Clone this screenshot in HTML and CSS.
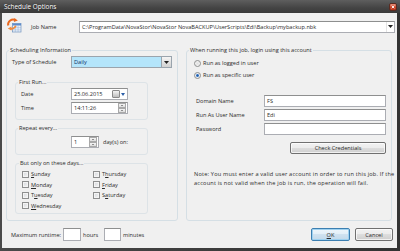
FILE: index.html
```html
<!DOCTYPE html>
<html lang="en">
<head>
    <meta charset="UTF-8">
    <title>Schedule Options</title>
    <link rel="stylesheet" href="styles.css">
</head>
<body>
<div class="window">
    <div class="titlebar">
        <span class="title">Schedule Options</span>
        <span class="close-btn">
            <svg viewBox="0 0 8 8" width="8" height="8">
                <path d="M2.3 2.3l3.4 3.4M5.7 2.3l-3.4 3.4" stroke="#fff" stroke-width="1.2"/>
            </svg>
        </span>
    </div>

    <div class="dialog">
        <!-- job name -->
        <div class="job-row">
            <svg class="job-icon" viewBox="0 0 16 16" width="16" height="16">
                <rect x="6.5" y="6.5" width="8.5" height="8.5" fill="#eef4fb" stroke="#6f92bd" stroke-width="0.7"/>
                <rect x="6.5" y="6.5" width="8.5" height="2" fill="#5f8ccb"/>
                <path d="M6.5 10.7h8.5M6.5 12.9h8.5M9.3 8.5v6.5M12.1 8.5v6.5" stroke="#8eaad0" stroke-width="0.5"/>
                <path d="M2.2 8.5A5 5 0 0 1 9.6 3.2" fill="none" stroke="#e9681d" stroke-width="2"/>
                <path d="M8.4 0.9l3.4 2.6-3.9 1.6z" fill="#e9681d"/>
                <path d="M9.8 8.8A4.6 4.6 0 0 1 4.2 11.6" fill="none" stroke="#f08a3c" stroke-width="1.8"/>
                <path d="M5.4 13.6l-3.6-2.2 3.8-1.8z" fill="#f08a3c"/>
            </svg>
            <span class="job-label">Job Name</span>
            <div class="combo job-combo">
                <span class="combo-text">C:\ProgramData\NovaStor\NovaStor NovaBACKUP\UserScripts\Edi\Backup\mybackup.nbk</span>
                <span class="drop-btn">
                    <svg viewBox="0 0 5 3" width="5" height="3"><path d="M0 0h5L2.5 3z" fill="#222"/></svg>
                </span>
            </div>
        </div>

        <div class="groups">
            <!-- left column -->
            <fieldset class="group group-left">
                <legend>Scheduling Information</legend>
                <div class="field-row type-row">
                    <label class="type-label">Type of Schedule</label>
                    <div class="combo select-daily">
                        <span class="combo-text">Daily</span>
                        <span class="select-btn">
                            <svg viewBox="0 0 5 3" width="5" height="3"><path d="M0 0h5L2.5 3z" fill="#222"/></svg>
                        </span>
                    </div>
                </div>

                <fieldset class="subgroup first-run">
                    <legend>First Run...</legend>
                    <div class="field-row">
                        <label class="sub-label">Date</label>
                        <div class="input date-input">
                            <span class="input-text">25.06.2015</span>
                            <span class="cal-btn"></span>
                            <svg viewBox="0 0 4 3" width="4" height="3"><path d="M0 0h4L2 3z" fill="#2c5fa8"/></svg>
                        </div>
                    </div>
                    <div class="field-row time-row">
                        <label class="sub-label">Time</label>
                        <div class="input time-input">
                            <span class="input-text">14:11:26</span>
                            <span class="spin">
                                <span class="spin-up"></span>
                                <span class="spin-down"></span>
                            </span>
                        </div>
                    </div>
                </fieldset>

                <fieldset class="subgroup repeat">
                    <legend>Repeat every...</legend>
                    <div class="field-row">
                        <span class="sub-label"></span>
                        <div class="input repeat-input">
                            <span class="input-text">1</span>
                            <span class="spin">
                                <span class="spin-up"></span>
                                <span class="spin-down"></span>
                            </span>
                        </div>
                        <span class="unit">day(s) on:</span>
                    </div>
                </fieldset>

                <fieldset class="subgroup days">
                    <legend>But only on these days...</legend>
                    <div class="day-grid">
                        <label class="day"><span class="check"></span><u>S</u>unday</label>
                        <label class="day"><span class="check"></span><u>M</u>onday</label>
                        <label class="day"><span class="check"></span>T<u>u</u>esday</label>
                        <label class="day"><span class="check"></span><u>W</u>ednesday</label>
                        <label class="day"><span class="check"></span>T<u>h</u>ursday</label>
                        <label class="day"><span class="check"></span><u>F</u>riday</label>
                        <label class="day"><span class="check"></span>S<u>a</u>turday</label>
                    </div>
                </fieldset>
            </fieldset>

            <!-- right column -->
            <fieldset class="group group-right">
                <legend>When running this job, login using this account</legend>
                <label class="radio-row"><span class="radio"></span>Run as logged in user</label>
                <label class="radio-row second"><span class="radio checked"></span>Run as specific user</label>

                <div class="cred-row first">
                    <label class="cred-label">Domain Name</label>
                    <div class="input cred-input"><span class="input-text">FS</span></div>
                </div>
                <div class="cred-row">
                    <label class="cred-label">Run As User Name</label>
                    <div class="input cred-input"><span class="input-text">Edi</span></div>
                </div>
                <div class="cred-row">
                    <label class="cred-label">Password</label>
                    <div class="input cred-input"></div>
                </div>
                <div class="btn-row">
                    <button class="btn check-btn">Check Credentials</button>
                </div>

                <p class="note">Note: You must enter a valid user account in order to run this job. If the<br>account is not valid when the job is run, the operation will fail.</p>
            </fieldset>
        </div>

        <div class="bottom-row">
            <span class="runtime-label">Maximum runtime:</span>
            <div class="input small-input"></div>
            <span class="runtime-unit hours">hours</span>
            <div class="input small-input minutes-input"></div>
            <span class="runtime-unit">minutes</span>
            <span class="spacer"></span>
            <button class="btn ok-btn"><u>O</u>K</button>
            <button class="btn cancel-btn">Cancel</button>
        </div>
    </div>
</div>
</body>
</html>
```

FILE: styles.css
```css
:root {
    --dialog-bg: #f0f0f0;
    --group-border: #d5dfe5;
    --input-border: #abadb3;
    --text-color: #2a2a2a;
}
body {
    margin: 0;
    width: 400px;
    height: 251px;
    overflow: hidden;
    font-family: 'Open Sans', 'Liberation Sans', sans-serif;
    font-size: 5.6px;
    color: var(--text-color);
    background-color: #3a3a3a;
}
.window {
    width: 400px;
    height: 251px;
    display: flex;
    flex-direction: column;
    background: linear-gradient(90deg, #4a4a4a, #3d3d3d 50%, #333);
}
.titlebar {
    height: 13px;
    flex: none;
    display: flex;
    align-items: center;
    padding: 0 4px;
    background: linear-gradient(#5e5e5e, #444 60%, #3a3a3a);
}
.title {
    flex: 1;
    color: #fff;
    font-size: 6.4px;
    text-shadow: 0 0 2px rgba(0,0,0,0.6);
}
.close-btn {
    width: 8px;
    height: 8px;
    display: flex;
    border-radius: 2px;
    border: 1px solid #5a2a20;
    background: linear-gradient(#e9907a, #c9452a 55%, #b63217);
    box-sizing: border-box;
    align-items: center;
    justify-content: center;
    margin-right: -1px;
}
.close-btn svg {
    width: 6px;
    height: 6px;
}
.dialog {
    flex: 1;
    margin: 0 3px 3px 2px;
    padding: 0 2px 0 4px;
    background-color: var(--dialog-bg);
    display: flex;
    flex-direction: column;
}

/* job row */
.job-row {
    display: flex;
    align-items: center;
    height: 15px;
    margin-top: 6px;
}
.job-icon {
    align-self: flex-start;
    margin-top: -2px;
    flex: none;
}
.job-label {
    width: 48px;
    margin-left: 9px;
}
.combo {
    display: flex;
    align-items: center;
    height: 12px;
    box-sizing: border-box;
    border: 1px solid var(--input-border);
    border-top-color: #8e8f8f;
    background-color: #fff;
}
.job-combo {
    flex: 1;
}
.combo-text {
    flex: 1;
    padding-left: 2px;
    white-space: nowrap;
    overflow: hidden;
}
.drop-btn {
    width: 7px;
    height: 100%;
    display: flex;
    align-items: center;
    justify-content: center;
    border-left: 1px solid #e3e3e3;
}

/* group boxes */
.groups {
    display: flex;
    gap: 8px;
    height: 175px;
    margin-top: 12px;
    padding-right: 3px;
}
fieldset {
    margin: 0;
    min-width: 0;
    box-sizing: border-box;
    border: 1px solid var(--group-border);
    border-radius: 3px;
    padding: 0 5px;
}
legend {
    padding: 0 1px;
    margin-left: -3px;
    height: 8px;
    line-height: 8px;
}
.group-left {
    width: 172px;
    flex: none;
}
.group-right {
    flex: 1;
    padding: 0 5px 0 7px;
}
.group-right legend {
    margin-left: -5px;
}
.field-row {
    display: flex;
    align-items: center;
    height: 12px;
}
.type-row {
    margin-top: 2px;
}
.type-label {
    width: 59px;
}
.select-daily {
    width: 101px;
    background-color: #b4e5fb;
    border-color: #9aa4ad;
    color: #0c2f63;
}
.select-btn {
    width: 10px;
    height: 100%;
    display: flex;
    align-items: center;
    justify-content: center;
    box-sizing: border-box;
    border-left: 1px solid #9aa4ad;
    background: linear-gradient(#f5f5f5, #e2e2e2 50%, #d2d2d2);
}
.subgroup {
    width: 133px;
    margin-left: 3px;
    border-color: #dde3e7;
}
.first-run {
    margin-top: 10px;
    padding-bottom: 5px;
}
.first-run .field-row:first-of-type {
    margin-top: 2px;
}
.time-row {
    margin-top: 2px;
}
.sub-label {
    width: 50px;
    flex: none;
}
.input {
    height: 12px;
    box-sizing: border-box;
    border: 1px solid var(--input-border);
    border-top-color: #8e8f8f;
    background-color: #fff;
    display: flex;
    align-items: center;
}
.input-text {
    flex: 1;
    padding-left: 2px;
    white-space: nowrap;
}
.date-input {
    width: 57px;
    padding-right: 2px;
}
.cal-btn {
    width: 6px;
    height: 6px;
    border: 1px solid #8a8a8a;
    border-radius: 1px;
    background: linear-gradient(#f4f4f4, #bdbdbd);
    margin-right: 1px;
}
.time-input {
    width: 57px;
}
.spin {
    width: 8px;
    height: 10px;
    display: flex;
    flex-direction: column;
    margin-right: 1px;
}
.spin-up, .spin-down {
    flex: 1;
    box-sizing: border-box;
    border: 1px solid #a9a9a9;
    background: linear-gradient(#f5f5f5, #dcdcdc);
    position: relative;
}
.spin-up::after, .spin-down::after {
    content: '';
    position: absolute;
    left: 1.5px;
    top: 1px;
    border-left: 1.5px solid transparent;
    border-right: 1.5px solid transparent;
}
.spin-up::after {
    border-bottom: 1.5px solid #333;
}
.spin-down::after {
    border-top: 1.5px solid #333;
}
.repeat {
    margin-top: 4px;
    padding-top: 4px;
    padding-bottom: 6px;
}
.repeat-input {
    width: 28px;
}
.unit {
    margin-left: 4px;
}
.days {
    margin-top: 4px;
    padding: 2px 5px 2px 6px;
}
.day-grid {
    display: grid;
    grid-template-columns: 71px 1fr;
    grid-template-rows: repeat(4, 10.5px);
    grid-auto-flow: column;
}
.day {
    display: flex;
    align-items: center;
}
.check {
    width: 7px;
    height: 7px;
    box-sizing: border-box;
    border: 1px solid #8e8f8f;
    background: linear-gradient(135deg, #d3d6da, #f7f7f7);
    box-shadow: inset 0 0 0 1px #f4f4f4;
    margin-right: 2px;
}

/* account */
.radio-row {
    display: flex;
    align-items: center;
    height: 8px;
    margin-top: 5px;
}
.radio-row.second {
    margin-top: 4px;
}
.radio {
    width: 7px;
    height: 7px;
    box-sizing: border-box;
    border-radius: 50%;
    border: 1px solid #8e8f8f;
    background: radial-gradient(circle, #e0e0e0, #fafafa);
    margin-right: 2px;
}
.radio.checked {
    background: radial-gradient(circle, #1f5ba8 0, #3b7ac6 35%, #e4e8ee 45%, #fafafa);
}
.cred-row {
    display: flex;
    align-items: center;
    height: 12px;
    margin-top: 2px;
}
.cred-row.first {
    margin-top: 16px;
}
.cred-label {
    width: 68px;
    margin-left: 2px;
    flex: none;
}
.cred-input {
    flex: 1;
}
.btn-row {
    display: flex;
    justify-content: flex-end;
    margin-top: 7px;
}
.btn {
    height: 12px;
    padding: 0;
    font-family: inherit;
    font-size: inherit;
    color: var(--text-color);
    border: 1px solid #707070;
    border-radius: 2px;
    background: linear-gradient(#f2f2f2, #ebebeb 50%, #dddddd 50%, #cfcfcf);
    box-shadow: inset 0 0 0 1px rgba(255,255,255,0.7);
}
.check-btn {
    width: 96px;
}
.note {
    margin: 16px 0 0;
    line-height: 8.5px;
    letter-spacing: 0.2px;
    white-space: nowrap;
}

/* bottom */
.bottom-row {
    display: flex;
    align-items: center;
    height: 13px;
    margin-top: 7px;
    padding: 0 2px 0 5px;
}
.runtime-label {
    width: 52px;
}
.small-input {
    width: 18px;
    height: 13px;
}
.minutes-input {
    width: 17px;
}
.runtime-unit {
    margin-left: 2px;
}
.runtime-unit.hours {
    width: 21px;
}
.bottom-row .runtime-unit:last-of-type {
    margin-left: 4px;
}
.spacer {
    flex: 1;
}
.ok-btn {
    width: 39px;
    height: 13px;
    border-color: #3c7fb1;
    background: linear-gradient(#eef6fb, #e1eef7 50%, #cfe2f0 50%, #c2d9ea);
    box-shadow: inset 0 0 0 1px #9ed1f0;
}
.cancel-btn {
    width: 38px;
    height: 13px;
    margin-left: 5px;
}
```
